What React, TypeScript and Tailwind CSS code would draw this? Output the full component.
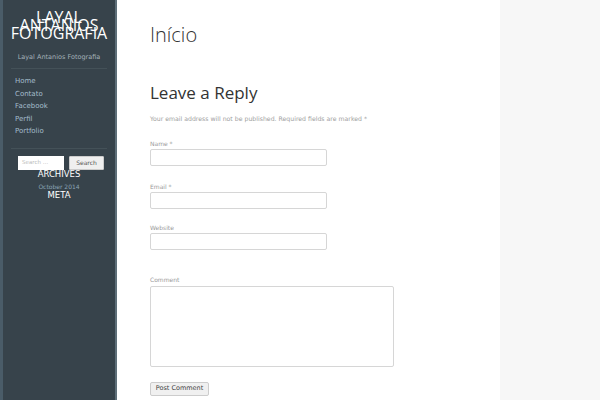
const MENU = ["Home", "Contato", "Facebook", "Perfil", "Portfolio"];

function Field({ label, className }: { label: string; className: string }) {
  return (
    <div className={className}>
      <div className="text-[6px] leading-[8px] text-[#9a9a9a]">{label}</div>
      <div className="mt-[1px] h-[17px] w-[177px] rounded-[2px] border border-[#d6d6d6] bg-white" />
    </div>
  );
}

export default function App() {
  return (
    <div className="flex h-[400px] w-[600px] overflow-hidden bg-white font-['DejaVu_Sans',sans-serif]">
      <aside className="flex w-[117px] shrink-0 flex-col border-l-[3px] border-r-[2px] border-l-[#4a5c68] border-r-[#5e6f79] bg-[#37434b] text-center">
        <div className="mt-[13px] font-['Open_Sans',sans-serif] text-[16px] leading-[8px] text-white">
          <div>LAYAL</div>
          <div>ANTANIOS</div>
          <div>FOTOGRAFIA</div>
        </div>
        <div className="mt-[16px] text-[6.5px] leading-[8px] text-[#a3b0b8]">Layal Antanios Fotografia</div>
        <div className="mx-[8px] mt-[7px] h-px bg-[#445158]" />
        <ul className="mt-[6px] px-[12px] text-left text-[7px] leading-[12.5px] text-[#a4bccc]">
          {MENU.map((m) => (
            <li key={m}>{m}</li>
          ))}
        </ul>
        <div className="mx-[8px] mt-[10px] h-px bg-[#445158]" />
        <div className="mt-[7px] flex justify-center gap-[5px] pl-[4px]">
          <div className="flex h-[14px] w-[46px] items-center bg-white px-[4px] text-[5.5px] text-[#bbb]">Search …</div>
          <div className="flex h-[14px] w-[35px] items-center justify-center rounded-[1px] border border-[#ccc] bg-[#efefef] text-[6px] text-[#555]">
            Search
          </div>
        </div>
        <div className="-mt-[1px] text-[8.5px] leading-[10px] text-white">ARCHIVES</div>
        <div className="mt-[4px] text-[6px] leading-[7px] text-[#8aa3b5]">October 2014</div>
        <div className="text-[8.5px] leading-[10px] text-white">META</div>
      </aside>
      <main className="w-[383px] shrink-0 pl-[33px] text-[#333]">
        <h1 className="mt-[22px] font-['Open_Sans',sans-serif] text-[20px] leading-[26px] font-light">Início</h1>
        <h2 className="mt-[34px] font-['Open_Sans',sans-serif] text-[17px] leading-[22px]">Leave a Reply</h2>
        <p className="mt-[11px] text-[6.2px] leading-[8px] text-[#a0a0a0]">
          Your email address will not be published. Required fields are marked *
        </p>
        <Field label="Name *" className="mt-[17px]" />
        <Field label="Email *" className="mt-[17px]" />
        <Field label="Website" className="mt-[15px]" />
        <div className="mt-[26px] text-[6px] leading-[8px] text-[#9a9a9a]">Comment</div>
        <div className="mt-[2px] h-[81px] w-[244px] rounded-[2px] border border-[#d6d6d6] bg-white" />
        <div className="mt-[15px] flex h-[14px] w-[59px] items-center justify-center rounded-[2px] border border-[#ccc] bg-[#f0f0f0] text-[6.5px] text-[#444]">
          Post Comment
        </div>
      </main>
      <div className="flex-1 bg-[#f7f7f7]" />
    </div>
  );
}
